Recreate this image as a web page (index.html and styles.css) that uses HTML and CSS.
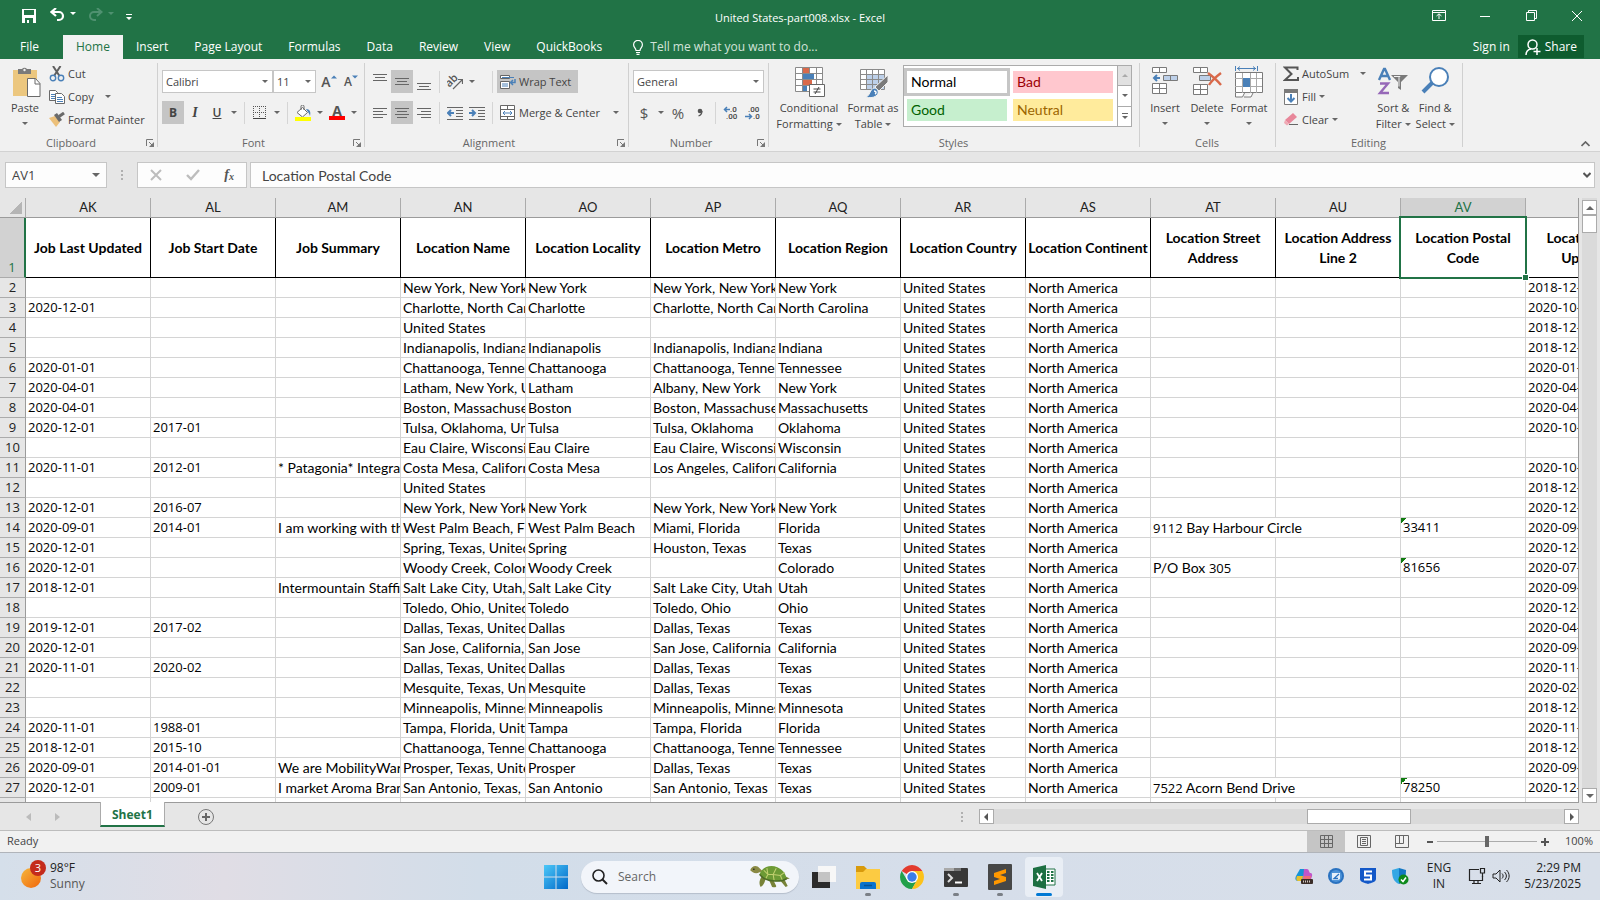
FILE: index.html
```html
<!DOCTYPE html>
<html lang="en">
<head>
    <meta charset="UTF-8">
    <meta name="viewport" content="width=device-width, initial-scale=1.0">
    <title>United States-part008.xlsx - Excel</title>
    <link rel="stylesheet" href="styles.css">
</head>
<body>

    <header class="titlebar">
        <div class="quick-access">
            <button class="qa-save" aria-label="Save"><svg width="14" height="14" viewBox="0 0 14 14"><path d="M0 0h14v14H0z" fill="#fff"/><path d="M2 1h10v5H2zM3 9h8v5H3z" fill="#217346"/><path d="M5 11h2v3H5z" fill="#fff"/></svg></button>
            <button class="qa-undo" aria-label="Undo"><svg width="26" height="14" viewBox="0 0 26 14"><path d="M6 0L1.500 4L6 8M2 4h7a4 4 0 0 1 0 8H7" fill="none" stroke="#fff" stroke-width="2.200"/><path d="M20 4h6l-3 3z" fill="#fff"/></svg></button>
            <button class="qa-redo" aria-label="Redo" disabled><svg width="26" height="14" viewBox="0 0 26 14"><path d="M9 0l4.500 4L9 8M13 4H6a4 4 0 0 0 0 8h2" fill="none" stroke="#4f9170" stroke-width="2"/><path d="M20 4h6l-3 3z" fill="#4f9170"/></svg></button>
            <button class="qa-more" aria-label="Customize"><svg width="6" height="7" viewBox="0 0 6 7"><path d="M0 0h6v1H0zM0 3h6L3 6z" fill="#fff"/></svg></button>
        </div>
        <h1>United States-part008.xlsx - Excel</h1>
        <div class="window-buttons">
            <button aria-label="Ribbon options"><svg width="14" height="11" viewBox="0 0 14 11"><path d="M.5.5h13v10H.5zM.5 2.500h13M7 9V4M4.500 6L7 3.800L9.500 6" fill="none" stroke="#fff"/></svg></button>
            <button aria-label="Minimize"><svg width="10" height="10" viewBox="0 0 10 10"><path d="M0 5.500h10" stroke="#fff"/></svg></button>
            <button aria-label="Restore"><svg width="11" height="11" viewBox="0 0 11 11"><path d="M.5 2.500h8v8h-8zM2.500 2V.5h8v8H9" fill="none" stroke="#fff"/></svg></button>
            <button aria-label="Close"><svg width="10" height="10" viewBox="0 0 10 10"><path d="M0 0l10 10M10 0L0 10" stroke="#fff"/></svg></button>
        </div>
    </header>

    <nav class="tabs">
        <a class="file" href="#">File</a>
        <a class="active" href="#">Home</a>
        <a href="#">Insert</a>
        <a href="#">Page Layout</a>
        <a href="#">Formulas</a>
        <a href="#">Data</a>
        <a href="#">Review</a>
        <a href="#">View</a>
        <a href="#">QuickBooks</a>
        <button class="tell-me"><svg width="10" height="15" viewBox="0 0 10 15"><path d="M3 10.500C3 8 .6 7.500.6 4.800a4.400 4.400 0 0 1 8.800 0C9.400 7.500 7 8 7 10.500zM3 12.500h4M3.500 14.400h3" fill="none" stroke="#fff" stroke-width="1.200"/></svg>Tell me what you want to do...</button>
        <a class="sign-in" href="#">Sign in</a>
        <button class="share"><svg width="16" height="16" viewBox="0 0 16 16"><circle cx="7.500" cy="5.500" r="4.500" fill="none" stroke="#fff" stroke-width="1.500"/><path d="M1 16c0-3.500 2-5.500 5-6M12 9v7M8.500 12.500h7" fill="none" stroke="#fff" stroke-width="1.500"/></svg>Share</button>
    </nav>

    <section class="ribbon">
        <div class="group clipboard">
            <div class="group-body">
                <button class="big">
                    <svg width="32" height="32" viewBox="0 0 32 32"><path d="M4 4h24v26H4z" fill="#ecc77f"/><path d="M9 3h4a3 3 0 0 1 5 0h4v5H9z" fill="#7a7a7a"/><circle cx="15.500" cy="4" r="1.200" fill="#f1f1f1"/><path d="M18.500 12.500h8l4.500 5v13H18.500z" fill="#fff" stroke="#6a6a6a"/><path d="M26 12.500V18h5" fill="none" stroke="#6a6a6a"/></svg>
                    <span>Paste</span><i class="arrow"></i>
                </button>
                <div class="small-list">
                    <button class="small"><svg width="16" height="16" viewBox="0 0 16 16"><path d="M4 0l6.500 10M11.500 0L5 10" stroke="#5f5f5f" stroke-width="2"/><circle cx="4" cy="12" r="2.700" fill="none" stroke="#4a80b8" stroke-width="1.400"/><circle cx="12" cy="12" r="2.700" fill="none" stroke="#4a80b8" stroke-width="1.400"/></svg>Cut</button>
                    <button class="small"><svg width="16" height="16" viewBox="0 0 16 16"><path d="M.5 1.500h6l2 2v8h-8z" fill="#fff" stroke="#6a6a6a"/><path d="M2 5.500h4M2 7.500h4M2 9.500h4" stroke="#4a80b8"/><path d="M6.500 4.500h6l3 3v7h-9z" fill="#fff" stroke="#6a6a6a"/><path d="M8 8.500h5M8 10.500h6M8 12.500h6" stroke="#4a80b8"/></svg>Copy<i class="arrow wide"></i></button>
                    <button class="small"><svg width="16" height="16" viewBox="0 0 16 16"><path d="M0 6l6-2 5 6-4 5z" fill="#ecc07a"/><path d="M5 3l3-2 5 7-3 2z" fill="#6a6a6a"/><path d="M10 4.500L15 1" stroke="#6a6a6a" stroke-width="3"/></svg>Format Painter</button>
                </div>
            </div>
            <div class="group-label">Clipboard<button class="launcher" aria-label="Clipboard settings"><svg width="8" height="8" viewBox="0 0 8 8"><path d="M.5 7V.5H7M3 3l3 3" fill="none" stroke="#777"/><path d="M8 3v5H3z" fill="#777"/></svg></button></div>
        </div>

        <div class="group font">
            <div class="group-body rows">
                <div class="row">
                    <span class="picker"><select class="font-name" aria-label="Font"><option>Calibri</option></select></span>
                    <span class="picker"><select class="font-size" aria-label="Font size"><option>11</option></select></span>
                    <button class="tool letter grow" aria-label="Increase font size">A<svg width="6" height="4" viewBox="0 0 6 4"><path d="M0 3.500h6L3 .5z" fill="#4a80b8"/></svg></button>
                    <button class="tool letter shrink" aria-label="Decrease font size">A<svg width="6" height="4" viewBox="0 0 6 4"><path d="M0 .5h6L3 3.500z" fill="#4a80b8"/></svg></button>
                </div>
                <div class="row">
                    <button class="tool bold on">B</button>
                    <button class="tool italic">I</button>
                    <button class="tool underline">U</button>
                    <button class="drop" aria-label="Underline styles"><i class="arrow"></i></button>
                    <span class="sep"></span>
                    <button class="tool" aria-label="Borders"><svg width="14" height="14" viewBox="0 0 14 14"><path d="M0 .5h13M0 6.500h13M.5 0v12M6.500 0v12M12.500 0v12" stroke="#555" stroke-dasharray="1 1"/><path d="M0 12.500h13" stroke="#444"/></svg></button>
                    <button class="drop" aria-label="Border styles"><i class="arrow"></i></button>
                    <span class="sep"></span>
                    <button class="tool" aria-label="Fill color"><svg width="16" height="16" viewBox="0 0 16 16"><path d="M2 7.500L7.500 2.500l5 5-5 4.500z" fill="#fff" stroke="#6a6a6a"/><path d="M6 5V1.500a1.500 1.500 0 0 1 3 0V5" fill="none" stroke="#6a6a6a"/><path d="M11 4c4 0 5 3 4 7c-1-3-2-4-4-7" fill="#4a80b8"/><path d="M0 12h16v4H0z" fill="#ff0"/></svg></button>
                    <button class="drop" aria-label="Fill colors"><i class="arrow"></i></button>
                    <button class="tool font-color" aria-label="Font color">A</button>
                    <button class="drop" aria-label="Font colors"><i class="arrow"></i></button>
                </div>
            </div>
            <div class="group-label">Font<button class="launcher" aria-label="Font settings"><svg width="8" height="8" viewBox="0 0 8 8"><path d="M.5 7V.5H7M3 3l3 3" fill="none" stroke="#777"/><path d="M8 3v5H3z" fill="#777"/></svg></button></div>
        </div>

        <div class="group alignment">
            <div class="group-body rows">
                <div class="row">
                    <button class="tool" aria-label="Top align"><svg width="14" height="16" viewBox="0 0 14 16"><path d="M0 .5h14M2 3.500h10M0 6.500h14" stroke="#666"/></svg></button>
                    <button class="tool on" aria-label="Middle align"><svg width="14" height="16" viewBox="0 0 14 16"><path d="M0 4.500h14M2 7.500h10M0 10.500h14" stroke="#666"/></svg></button>
                    <button class="tool" aria-label="Bottom align"><svg width="14" height="16" viewBox="0 0 14 16"><path d="M0 9.500h14M2 12.500h10M0 15.500h14" stroke="#666"/></svg></button>
                    <span class="sep"></span>
                    <button class="tool" aria-label="Orientation"><svg width="16" height="16" viewBox="0 0 16 16"><text x="-1" y="10" transform="rotate(-45 5 8)" font-family="Open Sans" font-size="11" font-weight="600" fill="#555">ab</text><path d="M6 15l9-9M11 5.500h4.500V10" fill="none" stroke="#666" stroke-width="1.200"/></svg></button>
                    <button class="drop" aria-label="Orientation options"><i class="arrow"></i></button>
                    <span class="space"></span>
                    <span class="sep"></span>
                    <button class="labelled on"><svg width="16" height="16" viewBox="0 0 16 16"><path d="M.5 1.500h9v3h-9zM.5 7.500h9v7h-9z" fill="#fff" stroke="#666"/><path d="M2 3.500h12M2 10h6M2 12h6" stroke="#4a80b8"/><path d="M15 5v3.500h-4M13 6L10.500 8.500L13 11" fill="none" stroke="#4a80b8" stroke-width="1.500"/></svg>Wrap Text</button>
                </div>
                <div class="row">
                    <button class="tool" aria-label="Align left"><svg width="14" height="12" viewBox="0 0 14 12"><path d="M0 1.500h14M0 4.500h10M0 7.500h14M0 10.500h10" stroke="#666"/></svg></button>
                    <button class="tool on" aria-label="Center"><svg width="14" height="12" viewBox="0 0 14 12"><path d="M0 1.500h14M2 4.500h10M0 7.500h14M2 10.500h10" stroke="#666"/></svg></button>
                    <button class="tool" aria-label="Align right"><svg width="14" height="12" viewBox="0 0 14 12"><path d="M0 1.500h14M4 4.500h10M0 7.500h14M4 10.500h10" stroke="#666"/></svg></button>
                    <span class="sep"></span>
                    <button class="tool" aria-label="Decrease indent"><svg width="16" height="14" viewBox="0 0 16 14"><path d="M0 1.500h16M9 4.500h7M9 7.500h7M9 10.500h7M0 13.500h16" stroke="#666"/><path d="M7 7H1.500M4 4L1 7l3 3" fill="none" stroke="#4a80b8" stroke-width="2"/></svg></button>
                    <button class="tool" aria-label="Increase indent"><svg width="16" height="14" viewBox="0 0 16 14"><path d="M0 1.500h16M9 4.500h7M9 7.500h7M9 10.500h7M0 13.500h16" stroke="#666"/><path d="M0 7h5.500M3 4l3 3-3 3" fill="none" stroke="#4a80b8" stroke-width="2"/></svg></button>
                    <span class="sep"></span>
                    <button class="labelled"><svg width="16" height="16" viewBox="0 0 16 16"><path d="M.5.500h14v14H.5z" fill="#fff" stroke="#666"/><path d="M0 4.500h15M0 11.500h15M7.500 0v4M7.500 12v3" stroke="#666"/><path d="M3 8h9M5 6L3 8l2 2M10 6l2 2-2 2" fill="none" stroke="#4a80b8"/></svg>Merge &amp; Center<i class="arrow wide"></i></button>
                </div>
            </div>
            <div class="group-label">Alignment<button class="launcher" aria-label="Alignment settings"><svg width="8" height="8" viewBox="0 0 8 8"><path d="M.5 7V.5H7M3 3l3 3" fill="none" stroke="#777"/><path d="M8 3v5H3z" fill="#777"/></svg></button></div>
        </div>

        <div class="group number">
            <div class="group-body rows">
                <div class="row">
                    <span class="picker"><select class="number-format" aria-label="Number format"><option>General</option></select></span>
                </div>
                <div class="row">
                    <button class="tool sign">$</button>
                    <button class="drop" aria-label="Currency"><i class="arrow"></i></button>
                    <button class="tool sign">%</button>
                    <button class="tool" aria-label="Comma style"><svg width="6" height="10" viewBox="0 0 6 10"><circle cx="3" cy="3" r="2.300" fill="#555"/><path d="M5 3c0 3-1 4-3.500 5" fill="none" stroke="#555" stroke-width="1.300"/></svg></button>
                    <span class="sep"></span>
                    <button class="tool" aria-label="Increase decimal"><svg width="16" height="14" viewBox="0 0 16 14"><text x="7" y="6" font-family="Roboto" font-size="8" font-weight="500" fill="#444">.0</text><text x="3" y="13" font-family="Roboto" font-size="8" font-weight="500" fill="#444">.00</text><path d="M7 3.500H2M4 1L1.500 3.500L4 6" fill="none" stroke="#4a80b8" stroke-width="1.500"/></svg></button>
                    <button class="tool" aria-label="Decrease decimal"><svg width="16" height="14" viewBox="0 0 16 14"><text x="3" y="6" font-family="Roboto" font-size="8" font-weight="500" fill="#444">.00</text><text x="8" y="13" font-family="Roboto" font-size="8" font-weight="500" fill="#444">.0</text><path d="M0 10.500h6M4 8l2.500 2.500L4 13" fill="none" stroke="#4a80b8" stroke-width="1.500"/></svg></button>
                </div>
            </div>
            <div class="group-label">Number<button class="launcher" aria-label="Number settings"><svg width="8" height="8" viewBox="0 0 8 8"><path d="M.5 7V.5H7M3 3l3 3" fill="none" stroke="#777"/><path d="M8 3v5H3z" fill="#777"/></svg></button></div>
        </div>

        <div class="group styles">
            <div class="group-body">
                <button class="big wide">
                    <svg width="32" height="32" viewBox="0 0 32 32"><path d="M2.500 1.500h27v24h-27z" fill="#fff"/><path d="M10 2h6v5h-6zM10 14h9v5h-9z" fill="#d9694a"/><path d="M10 8h11v5H10zM10 20h4v5h-4z" fill="#4a80b8"/><path d="M2.500 1.500h27v24h-27zM2 7.500h28M2 13.500h28M2 19.500h28M9.500 1v24M16.500 1v6M23.500 1v24" fill="none" stroke="#8a8a8a"/><path d="M16.500 18.500h15v12h-15z" fill="#fff" stroke="#666"/><path d="M20.500 23h7M20.500 26h7M26 21l-4 7" stroke="#444"/></svg>
                    <span>Conditional</span><span>Formatting <i class="arrow"></i></span>
                </button>
                <button class="big table">
                    <svg width="32" height="32" viewBox="0 0 32 32"><path d="M3.500 3.500h24v20h-24z" fill="#fff"/><path d="M9 9h18v14H9z" fill="#bdd0e9"/><path d="M3.500 3.500h24v20h-24zM3 8.500h24M3 13.500h24M3 18.500h24M9.500 3v20M15.500 3v20M21.500 3v20" fill="none" stroke="#8a8a8a"/><path d="M31 9v7l-9 9-4-4z" fill="#7a7a7a" stroke="#f1f1f1"/><path d="M9 31c4-1 4-8 8-9 4 0 6 5 2 8-3 2-7 2-10 1z" fill="#4a80b8" stroke="#f1f1f1"/><path d="M17 25c2 0 3 2 1 3" fill="none" stroke="#fff" stroke-width="1.500"/></svg>
                    <span>Format as</span><span>Table <i class="arrow"></i></span>
                </button>
                <div class="gallery">
                    <div class="swatches">
                        <button class="swatch normal">Normal</button>
                        <button class="swatch bad">Bad</button>
                        <button class="swatch good">Good</button>
                        <button class="swatch neutral">Neutral</button>
                    </div>
                    <div class="gallery-scroll">
                        <button disabled aria-label="Previous styles"><i class="arrow up"></i></button>
                        <button aria-label="Next styles"><i class="arrow"></i></button>
                        <button class="more" aria-label="More styles"><i class="arrow"></i></button>
                    </div>
                </div>
            </div>
            <div class="group-label">Styles</div>
        </div>

        <div class="group cells">
            <div class="group-body">
                <button class="big narrow">
                    <svg width="32" height="32" viewBox="0 0 32 32"><path d="M3.500 1.500h14v5h-14zM10.500 1v5M3.500 17.500h14v10h-14zM10.500 17v10M3 22.500h14" fill="#fff" stroke="#7a7a7a"/><path d="M14.500 9.500h14v5h-14z" fill="#bdd0e9" stroke="#7a7a7a"/><path d="M21.500 9v5" stroke="#7a7a7a"/><path d="M11 12H5M8 9l-3 3 3 3" fill="none" stroke="#4a80b8" stroke-width="2"/></svg>
                    <span>Insert</span><i class="arrow"></i>
                </button>
                <button class="big narrow">
                    <svg width="32" height="32" viewBox="0 0 32 32"><path d="M2.500 1.500h14v5h-14zM9.500 1v5M2.500 18.500h14v10h-14zM9.500 18v10M2 23.500h14" fill="#fff" stroke="#7a7a7a"/><path d="M8.500 9.500h11v5h-11z" fill="#bdd0e9" stroke="#7a7a7a"/><path d="M17 7c4 3 9 7 13 12M30 7c-4 3-9 7-12 12" fill="none" stroke="#d9694a" stroke-width="2.400"/></svg>
                    <span>Delete</span><i class="arrow"></i>
                </button>
                <button class="big narrow">
                    <svg width="32" height="32" viewBox="0 0 32 32"><path d="M2.500 6.500h27v20h-27z" fill="#fff" stroke="#7a7a7a"/><path d="M2 12.500h27M2 20.500h27M9.500 7v20M17.500 7v20M23.500 7v20" stroke="#aaa"/><path d="M10 12h7v9h-7z" fill="#4a80b8"/><path d="M2.500 27v4h7l2-4M11 31h7l2-4" fill="#fff" stroke="#7a7a7a"/><path d="M2.500 0v5M24.500 0v5M4 2.500h19M7 .5L4.500 2.500L7 4.500M20 .5l2.500 2L20 4.500" fill="none" stroke="#4a80b8"/></svg>
                    <span>Format</span><i class="arrow"></i>
                </button>
            </div>
            <div class="group-label">Cells</div>
        </div>

        <div class="group editing">
            <div class="group-body">
                <div class="small-list">
                    <button class="small"><svg width="16" height="16" viewBox="0 0 16 16"><path d="M14.500 4V1.500H2L8.500 8L2 14h13v-3" fill="none" stroke="#555" stroke-width="2"/></svg>AutoSum<i class="arrow wide"></i></button>
                    <button class="small"><svg width="16" height="16" viewBox="0 0 16 16"><path d="M1.500 1.500h13v14h-13z" fill="#fff" stroke="#7a7a7a"/><path d="M1 0h14v4H1z" fill="#7a7a7a"/><path d="M8 5v7M4.500 9L8 12.500L11.500 9" fill="none" stroke="#4a80b8" stroke-width="2"/></svg>Fill<i class="arrow"></i></button>
                    <button class="small"><svg width="16" height="16" viewBox="0 0 16 16"><path d="M2 8l8-7 4 4-8 7z" fill="#e8879a"/><path d="M2 8l4 4-2 1.500L1 11z" fill="#f0aab5"/><path d="M6 12.500h9" stroke="#666"/></svg>Clear<i class="arrow"></i></button>
                </div>
                <button class="big narrow sort">
                    <svg width="32" height="32" viewBox="0 0 32 32"><path d="M2 14L7 3h1l5 11M4 10h7" fill="none" stroke="#4a80b8" stroke-width="2.400"/><path d="M3 17.500h8l-8 9.500h9" fill="none" stroke="#9668b8" stroke-width="2.400"/><path d="M14 9h17l-7 7v8l-3-2v-6z" fill="#7a7a7a"/><path d="M17 10.500h6l-1 1v9" fill="none" stroke="#f1f1f1"/></svg>
                    <span>Sort &amp;</span><span>Filter <i class="arrow"></i></span>
                </button>
                <button class="big narrow">
                    <svg width="32" height="32" viewBox="0 0 32 32"><circle cx="20" cy="11" r="9" fill="#fff" stroke="#4a80b8" stroke-width="2"/><path d="M13 17L4 26" stroke="#4a80b8" stroke-width="4"/></svg>
                    <span>Find &amp;</span><span>Select <i class="arrow"></i></span>
                </button>
            </div>
            <div class="group-label">Editing</div>
        </div>

        <button class="collapse" aria-label="Collapse the ribbon"><svg width="9" height="6" viewBox="0 0 9 6"><path d="M.5 5l4-4 4 4" fill="none" stroke="#666" stroke-width="1.700"/></svg></button>
    </section>

    <section class="formula-bar">
        <div class="name-box"><input type="text" value="AV1" aria-label="Name box"><button aria-label="Named ranges"><i class="arrow large"></i></button></div>
        <span class="grip"></span>
        <div class="formula-buttons">
            <button aria-label="Cancel" disabled><svg width="12" height="12" viewBox="0 0 12 12"><path d="M1 1l10 10M11 1L1 11" stroke="#bdbdbd" stroke-width="2"/></svg></button>
            <button aria-label="Enter" disabled><svg width="14" height="12" viewBox="0 0 14 12"><path d="M1 6l4 4 8-9" fill="none" stroke="#bdbdbd" stroke-width="2.400"/></svg></button>
            <button class="fx" aria-label="Insert function">f<sub>x</sub></button>
        </div>
        <div class="formula-input"><input type="text" value="Location Postal Code" aria-label="Formula"><button aria-label="Expand formula bar"><svg width="8" height="6" viewBox="0 0 8 6"><path d="M.5 1L4 4.500L7.500 1" fill="none" stroke="#555" stroke-width="2"/></svg></button></div>
    </section>

    <main class="workbook">
        <div class="sheet">
            <table>
                <thead>
                    <tr><th class="corner"></th><th>AK</th><th>AL</th><th>AM</th><th>AN</th><th>AO</th><th>AP</th><th>AQ</th><th>AR</th><th>AS</th><th>AT</th><th>AU</th><th class="current">AV</th><th></th></tr>
                </thead>
                <tbody>
                    <tr class="titles"><th>1</th><td>Job Last Updated</td><td>Job Start Date</td><td>Job Summary</td><td>Location Name</td><td>Location Locality</td><td>Location Metro</td><td>Location Region</td><td>Location Country</td><td>Location Continent</td><td>Location Street<br>Address</td><td>Location Address<br>Line 2</td><td class="selected">Location Postal<br>Code</td><td>Location Last<br>Updated</td></tr>
                    <tr><th>2</th><td></td><td></td><td></td><td>New York, New York, United States</td><td>New York</td><td>New York, New York</td><td>New York</td><td>United States</td><td>North America</td><td></td><td></td><td></td><td>2018-12-01</td></tr>
                    <tr><th>3</th><td>2020-12-01</td><td></td><td></td><td>Charlotte, North Carolina, United States</td><td>Charlotte</td><td>Charlotte, North Carolina</td><td>North Carolina</td><td>United States</td><td>North America</td><td></td><td></td><td></td><td>2020-10-01</td></tr>
                    <tr><th>4</th><td></td><td></td><td></td><td>United States</td><td></td><td></td><td></td><td>United States</td><td>North America</td><td></td><td></td><td></td><td>2018-12-01</td></tr>
                    <tr><th>5</th><td></td><td></td><td></td><td>Indianapolis, Indiana, United States</td><td>Indianapolis</td><td>Indianapolis, Indiana</td><td>Indiana</td><td>United States</td><td>North America</td><td></td><td></td><td></td><td>2018-12-01</td></tr>
                    <tr><th>6</th><td>2020-01-01</td><td></td><td></td><td>Chattanooga, Tennessee, United States</td><td>Chattanooga</td><td>Chattanooga, Tennessee</td><td>Tennessee</td><td>United States</td><td>North America</td><td></td><td></td><td></td><td>2020-01-01</td></tr>
                    <tr><th>7</th><td>2020-04-01</td><td></td><td></td><td>Latham, New York, United States</td><td>Latham</td><td>Albany, New York</td><td>New York</td><td>United States</td><td>North America</td><td></td><td></td><td></td><td>2020-04-01</td></tr>
                    <tr><th>8</th><td>2020-04-01</td><td></td><td></td><td>Boston, Massachusetts, United States</td><td>Boston</td><td>Boston, Massachusetts</td><td>Massachusetts</td><td>United States</td><td>North America</td><td></td><td></td><td></td><td>2020-04-01</td></tr>
                    <tr><th>9</th><td>2020-12-01</td><td>2017-01</td><td></td><td>Tulsa, Oklahoma, United States</td><td>Tulsa</td><td>Tulsa, Oklahoma</td><td>Oklahoma</td><td>United States</td><td>North America</td><td></td><td></td><td></td><td>2020-10-01</td></tr>
                    <tr><th>10</th><td></td><td></td><td></td><td>Eau Claire, Wisconsin, United States</td><td>Eau Claire</td><td>Eau Claire, Wisconsin</td><td>Wisconsin</td><td>United States</td><td>North America</td><td></td><td></td><td></td><td></td></tr>
                    <tr><th>11</th><td>2020-11-01</td><td>2012-01</td><td>* Patagonia* Integrated</td><td>Costa Mesa, California, United States</td><td>Costa Mesa</td><td>Los Angeles, California</td><td>California</td><td>United States</td><td>North America</td><td></td><td></td><td></td><td>2020-10-01</td></tr>
                    <tr><th>12</th><td></td><td></td><td></td><td>United States</td><td></td><td></td><td></td><td>United States</td><td>North America</td><td></td><td></td><td></td><td>2018-12-01</td></tr>
                    <tr><th>13</th><td>2020-12-01</td><td>2016-07</td><td></td><td>New York, New York, United States</td><td>New York</td><td>New York, New York</td><td>New York</td><td>United States</td><td>North America</td><td></td><td></td><td></td><td>2020-12-01</td></tr>
                    <tr><th>14</th><td>2020-09-01</td><td>2014-01</td><td>I am working with the</td><td>West Palm Beach, Florida, United States</td><td>West Palm Beach</td><td>Miami, Florida</td><td>Florida</td><td>United States</td><td>North America</td><td colspan="2"><span class="num">9112</span> Bay Harbour Circle</td><td class="flagged">33411</td><td>2020-09-01</td></tr>
                    <tr><th>15</th><td>2020-12-01</td><td></td><td></td><td>Spring, Texas, United States</td><td>Spring</td><td>Houston, Texas</td><td>Texas</td><td>United States</td><td>North America</td><td></td><td></td><td></td><td>2020-12-01</td></tr>
                    <tr><th>16</th><td>2020-12-01</td><td></td><td></td><td>Woody Creek, Colorado, United States</td><td>Woody Creek</td><td></td><td>Colorado</td><td>United States</td><td>North America</td><td>P/O Box <span class="num">305</span></td><td></td><td class="flagged">81656</td><td>2020-07-01</td></tr>
                    <tr><th>17</th><td>2018-12-01</td><td></td><td>Intermountain Staffing</td><td>Salt Lake City, Utah, United States</td><td>Salt Lake City</td><td>Salt Lake City, Utah</td><td>Utah</td><td>United States</td><td>North America</td><td></td><td></td><td></td><td>2020-09-01</td></tr>
                    <tr><th>18</th><td></td><td></td><td></td><td>Toledo, Ohio, United States</td><td>Toledo</td><td>Toledo, Ohio</td><td>Ohio</td><td>United States</td><td>North America</td><td></td><td></td><td></td><td>2020-12-01</td></tr>
                    <tr><th>19</th><td>2019-12-01</td><td>2017-02</td><td></td><td>Dallas, Texas, United States</td><td>Dallas</td><td>Dallas, Texas</td><td>Texas</td><td>United States</td><td>North America</td><td></td><td></td><td></td><td>2020-04-01</td></tr>
                    <tr><th>20</th><td>2020-12-01</td><td></td><td></td><td>San Jose, California, United States</td><td>San Jose</td><td>San Jose, California</td><td>California</td><td>United States</td><td>North America</td><td></td><td></td><td></td><td>2020-09-01</td></tr>
                    <tr><th>21</th><td>2020-11-01</td><td>2020-02</td><td></td><td>Dallas, Texas, United States</td><td>Dallas</td><td>Dallas, Texas</td><td>Texas</td><td>United States</td><td>North America</td><td></td><td></td><td></td><td>2020-11-01</td></tr>
                    <tr><th>22</th><td></td><td></td><td></td><td>Mesquite, Texas, United States</td><td>Mesquite</td><td>Dallas, Texas</td><td>Texas</td><td>United States</td><td>North America</td><td></td><td></td><td></td><td>2020-02-01</td></tr>
                    <tr><th>23</th><td></td><td></td><td></td><td>Minneapolis, Minnesota, United States</td><td>Minneapolis</td><td>Minneapolis, Minnesota</td><td>Minnesota</td><td>United States</td><td>North America</td><td></td><td></td><td></td><td>2018-12-01</td></tr>
                    <tr><th>24</th><td>2020-11-01</td><td>1988-01</td><td></td><td>Tampa, Florida, United States</td><td>Tampa</td><td>Tampa, Florida</td><td>Florida</td><td>United States</td><td>North America</td><td></td><td></td><td></td><td>2020-11-01</td></tr>
                    <tr><th>25</th><td>2018-12-01</td><td>2015-10</td><td></td><td>Chattanooga, Tennessee, United States</td><td>Chattanooga</td><td>Chattanooga, Tennessee</td><td>Tennessee</td><td>United States</td><td>North America</td><td></td><td></td><td></td><td>2018-12-01</td></tr>
                    <tr><th>26</th><td>2020-09-01</td><td>2014-01-01</td><td>We are MobilityWare</td><td>Prosper, Texas, United States</td><td>Prosper</td><td>Dallas, Texas</td><td>Texas</td><td>United States</td><td>North America</td><td></td><td></td><td></td><td>2020-09-01</td></tr>
                    <tr><th>27</th><td>2020-12-01</td><td>2009-01</td><td>I market Aroma Brands</td><td>San Antonio, Texas, United States</td><td>San Antonio</td><td>San Antonio, Texas</td><td>Texas</td><td>United States</td><td>North America</td><td colspan="2"><span class="num">7522</span> Acorn Bend Drive</td><td class="flagged">78250</td><td>2020-12-01</td></tr>
                    <tr><th></th><td></td><td></td><td></td><td></td><td></td><td></td><td></td><td></td><td></td><td></td><td></td><td></td><td></td></tr>
                </tbody>
            </table>
        </div>
        <div class="scroll-y">
            <button aria-label="Scroll up"><i class="arrow large up"></i></button>
            <div class="thumb"></div>
            <button class="end" aria-label="Scroll down"><i class="arrow large"></i></button>
        </div>
    </main>

    <section class="sheet-tabs">
        <button class="nav-arrow" aria-label="Previous sheet" disabled><svg width="5" height="8" viewBox="0 0 5 8"><path d="M5 0v8L0 4z" fill="#bbb"/></svg></button>
        <button class="nav-arrow" aria-label="Next sheet" disabled><svg width="5" height="8" viewBox="0 0 5 8"><path d="M0 0v8l5-4z" fill="#bbb"/></svg></button>
        <a class="sheet-tab" href="#">Sheet1</a>
        <button class="add-sheet" aria-label="New sheet"><svg width="16" height="16" viewBox="0 0 16 16"><circle cx="8" cy="8" r="7.500" fill="none" stroke="#777"/><path d="M8 4v8M4 8h8" stroke="#666" stroke-width="2"/></svg></button>
        <span class="grip"></span>
        <div class="scroll-x">
            <button aria-label="Scroll left"><svg width="4" height="8" viewBox="0 0 4 8"><path d="M4 0v8L0 4z" fill="#555"/></svg></button>
            <div class="track"><div class="thumb"></div></div>
            <button aria-label="Scroll right"><svg width="4" height="8" viewBox="0 0 4 8"><path d="M0 0v8l4-4z" fill="#555"/></svg></button>
        </div>
    </section>

    <footer class="status">
        <span class="ready">Ready</span>
        <button class="view on" aria-label="Normal view"><svg width="13" height="13" viewBox="0 0 13 13"><path d="M.5.500h12v12H.5zM4.500 0v13M8.500 0v13M0 4.500h13M0 8.500h13" fill="none" stroke="#666"/></svg></button>
        <button class="view" aria-label="Page layout view"><svg width="14" height="13" viewBox="0 0 14 13"><path d="M.5.500h13v12H.5zM3.500 2.500h7v8h-7zM5 4.500h4M5 6.500h4M5 8.500h4" fill="none" stroke="#666"/></svg></button>
        <button class="view" aria-label="Page break view"><svg width="14" height="13" viewBox="0 0 14 13"><path d="M.5.500h13v12H.5zM.5 8.500h8V.5M4.500 0v8" fill="none" stroke="#666"/></svg></button>
        <button class="zoom-step" aria-label="Zoom out"><svg width="6" height="8" viewBox="0 0 6 8"><path d="M0 4h6" stroke="#555" stroke-width="2"/></svg></button>
        <input class="zoom" type="range" min="0" max="100" value="50" aria-label="Zoom">
        <button class="zoom-step" aria-label="Zoom in"><svg width="8" height="8" viewBox="0 0 8 8"><path d="M0 4h8M4 0v8" stroke="#555" stroke-width="2"/></svg></button>
        <span class="percent">100%</span>
    </footer>

    <section class="taskbar">
        <a class="weather" href="#">
            <svg width="27" height="32" viewBox="0 0 27 32"><defs><linearGradient id="sun" x1="0" y1="0" x2="1" y2="1"><stop offset="0" stop-color="#f6b73c"/><stop offset="1" stop-color="#f0660c"/></linearGradient></defs><circle cx="10" cy="18" r="10" fill="url(#sun)"/><circle cx="17" cy="8" r="8" fill="#c42b1c"/><text x="17" y="12" text-anchor="middle" font-family="Open Sans" font-size="11" fill="#fff">3</text></svg>
            <span>98°F<br><small>Sunny</small></span>
        </a>
        <div class="apps">
            <button aria-label="Start"><svg width="24" height="24" viewBox="0 0 24 24"><defs><linearGradient id="win" x1="0" y1="0" x2="1" y2="1"><stop offset="0" stop-color="#4cc8f8"/><stop offset="1" stop-color="#0067c8"/></linearGradient></defs><path d="M0 0h11.500v11.500H0zM12.500 0H24v11.500H12.500zM0 12.500h11.500V24H0zM12.500 12.500H24V24H12.500z" fill="url(#win)"/></svg></button>
            <label class="search">
                <svg width="16" height="16" viewBox="0 0 16 16"><circle cx="6.500" cy="6.500" r="5.500" fill="none" stroke="#222" stroke-width="1.600"/><path d="M10.500 10.500l4.500 4.500" stroke="#222" stroke-width="2"/></svg>
                <input type="text" placeholder="Search" aria-label="Search">
                <svg width="42" height="25" viewBox="0 0 40 24"><path d="M10 8C6 10 3 8 1 6c1-4 6-6 9-2l3 3z" fill="#8a8a45"/><path d="M12 12c-2 3-3 7-1 10 3-1 4-5 5-8zM19 15l3 7c3 1 4 0 4-1l-3-6zM30 16l5 6 2-1-3-6zM33 11l6 3-5 1z" fill="#778238"/><path d="M10 10C12 3 20 0 27 3c5 2 8 6 9 11-4 4-21 4-26-4z" fill="#6c9a35"/><path d="M14 6l4 4-2 4M18 10h5l3-6M23 10l1 6M23 10l7 1 4-3M30 11l2 5M18 10l-1-6" fill="none" stroke="#c2d070"/><path d="M10 10c5 7 20 8 26 4" fill="none" stroke="#4d6b26" stroke-width="1.500"/><circle cx="4.500" cy="5" r=".8" fill="#222"/></svg>
            </label>
            <button aria-label="Task view"><svg width="24" height="24" viewBox="0 0 24 24"><path d="M0 7h18v16H0z" fill="#2b2b2b"/><path d="M6 1h18v16H6z" fill="#f7f7f7"/><path d="M6 7h12v10H6z" fill="#c4c4c4"/></svg></button>
            <button class="running" aria-label="File Explorer"><svg width="24" height="24" viewBox="0 0 24 24"><path d="M0 1h8l3 3v3H0z" fill="#d89a0c"/><path d="M0 7h7l3-3h14v20H0z" fill="#fccb42"/><path d="M4 24v-5a2 2 0 0 1 2-2h12a2 2 0 0 1 2 2v5z" fill="#0a72cc"/><path d="M8 20.500h8" stroke="#075293" stroke-width="1.500"/></svg></button>
            <button aria-label="Chrome"><svg width="24" height="24" viewBox="1 1 22 22"><path d="M12 12L2.500 6.500A11 11 0 0 1 21.500 6.500H12z" fill="#e33b2e"/><path d="M12 12l4.800 2.500L12 23A11 11 0 0 1 2.500 6.500L7 14z" fill="#22a04a"/><path d="M12 6.500h9.500A11 11 0 0 1 12 23l4.800-8.500z" fill="#fcc21b"/><circle cx="12" cy="12" r="5.500" fill="#fff"/><circle cx="12" cy="12" r="4.300" fill="#3b7de9"/></svg></button>
            <button class="running" aria-label="Terminal"><svg width="24" height="24" viewBox="0 0 24 24"><rect x="0" y="3" width="24" height="19" rx="1" fill="#383838"/><path d="M0 3h10v3H0z" fill="#aaa"/><path d="M10 3h7v3h-7z" fill="#777"/><path d="M4 9l4 4L4 17" fill="none" stroke="#ddd" stroke-width="2"/><path d="M11 17.500h7" stroke="#fff" stroke-width="2"/></svg></button>
            <button class="running" aria-label="Sublime Text"><svg width="24" height="26" viewBox="0 0 24 26"><rect x="0" y="0" width="24" height="26" rx="1" fill="#474747"/><path d="M6 9l12-4v4l-6 2 6 2v4L6 21v-4l6-2-6-2z" fill="#ff9800"/></svg></button>
            <button class="running current" aria-label="Excel"><svg width="24" height="24" viewBox="0 0 24 24"><path d="M13 4h10v16H13z" fill="#fff" stroke="#217346"/><path d="M15 7h2.500M19 7h2.500M15 10h2.500M19 10h2.500M15 13h2.500M19 13h2.500M15 16h2.500M19 16h2.500" stroke="#217346" stroke-width="1.800"/><path d="M1 3l13-3v24L1 21z" fill="#1d6f42"/><path d="M5 8l5 8M10 8l-5 8" stroke="#fff" stroke-width="1.800"/></svg></button>
        </div>
        <div class="tray">
            <button aria-label="Copilot"><svg width="18" height="18" viewBox="0 0 18 18"><path d="M5 2h6l-4 12H3c-3 0-3-3-2-5z" fill="#1593d8"/><path d="M2 9h6l-1 5H3c-2 0-2-3-1-5z" fill="#e6c02c"/><path d="M9 2h3c2 0 2 3 3 4h1c2 1 1 4 0 6H8z" fill="#c156c9"/><path d="M9 9h7l-1 4H8z" fill="#ef6d77"/><rect x="6" y="12" width="12" height="5" rx="1" fill="#3a2d28"/><path d="M8 14.500h8" stroke="#cfc7c0" stroke-width="2" stroke-dasharray="1 1"/></svg></button>
            <button aria-label="Sync"><svg width="18" height="18" viewBox="0 0 18 18"><circle cx="9" cy="9" r="8" fill="#2a72c0"/><circle cx="9" cy="9" r="6" fill="#4d93d8"/><path d="M5 6h8v6l-2 1H5z" fill="#e6f0fa"/><path d="M12 7l-5 4.500h4" fill="none" stroke="#2a72c0" stroke-width="1.300"/></svg></button>
            <button aria-label="Snagit"><svg width="18" height="18" viewBox="0 0 18 18"><path d="M1 1h16v11c0 3-5 4-8 5-3-1-8-2-8-5z" fill="#1358c8"/><path d="M13 4.500H6v4h6v4H5" fill="none" stroke="#fff" stroke-width="2"/></svg></button>
            <button aria-label="Security"><svg width="18" height="18" viewBox="0 0 18 18"><path d="M1 3l7-2v16C3 15 1 11 1 3z" fill="#33a7e4"/><path d="M8 1l7 2c0 8-2 12-7 14z" fill="#1378c4"/><circle cx="12.500" cy="12.500" r="5" fill="#0d8a1c"/><path d="M10 12.500l2 2 3-4" fill="none" stroke="#fff" stroke-width="1.500"/></svg></button>
            <button class="language">ENG<br>IN</button>
            <button class="system" aria-label="Network and volume"><svg width="18" height="18" viewBox="0 0 18 18"><path d="M11 2.500H1.500v11h13V9M4 16.500h9M6 14v2M10 14v2" fill="none" stroke="#222" stroke-width="1.200"/><path d="M12.500 1.500h4V6h-4zM14.500 6v4" fill="none" stroke="#222" stroke-width="1.200"/></svg><svg width="18" height="18" viewBox="0 0 18 18"><path d="M1 7h3l4-4v12l-4-4H1zM10 6.500c1.500 1.500 1.500 3.500 0 5M12.500 5c2.500 2.500 2.500 5.500 0 8M14.500 3c3.500 3.500 3.500 8.500 0 12" fill="none" stroke="#222"/></svg></button>
            <button class="clock">2:29 PM<br>5/23/2025</button>
        </div>
    </section>

</body>
</html>
```
FILE: styles.css
```css
* {
    box-sizing: border-box;
}
body {
    margin: 0;
    height: 100vh;
    display: flex;
    flex-direction: column;
    overflow: hidden;
    background-color: #e6e6e6;
    color: #444;
    font-family: 'Open Sans', 'Noto Sans', sans-serif;
    font-size: 11px;
}
button, input, select {
    margin: 0;
    padding: 0;
    border: 0;
    background: none;
    color: inherit;
    font: inherit;
    outline: 0;
}
a {
    color: inherit;
    text-decoration: none;
}
svg {
    display: block;
    flex: none;
}

/* small drop-down triangle */
.arrow {
    display: inline-block;
    flex: none;
    border: 3px solid transparent;
    border-top-color: #666;
    border-bottom: 0;
}
.arrow.up {
    border-top: 0;
    border-bottom: 3px solid #666;
}
.arrow.large {
    border-width: 4px 4px 0;
}
.arrow.large.up {
    border-width: 0 4px 4px;
}

/* title bar */
.titlebar {
    flex: none;
    height: 35px;
    display: grid;
    grid-template-columns: 1fr auto 1fr;
    align-items: center;
    background-color: #217346;
    color: #fff;
}
.titlebar h1 {
    margin: 0;
    font-size: 11px;
    font-weight: 400;
}
.quick-access {
    display: flex;
    align-items: center;
    gap: 12px;
    padding: 0 0 5px 22px;
}
.quick-access .qa-save {
    padding-top: 1px;
}
.quick-access .qa-undo {
    margin-left: 2px;
}
.quick-access .qa-more {
    padding-top: 4px;
}
.window-buttons {
    display: flex;
    justify-content: flex-end;
    padding-bottom: 4px;
}
.window-buttons button {
    width: 46px;
    display: flex;
    justify-content: center;
    align-items: center;
}

/* ribbon tabs */
.tabs {
    flex: none;
    height: 24px;
    display: flex;
    background-color: #217346;
    color: #fff;
    font-size: 12px;
    line-height: 24px;
}
.tabs a {
    padding: 0 13px;
}
.tabs .file {
    padding: 0 24px 0 20px;
}
.tabs .active {
    background-color: #f1f1f1;
    color: #217346;
}
.tell-me {
    display: flex;
    align-items: center;
    gap: 7px;
    padding-left: 18px;
    color: #d3e3da;
}
.tabs .sign-in {
    margin-left: auto;
    padding: 0 8px;
}
.share {
    display: flex;
    align-items: center;
    gap: 4px;
    height: 23px;
    margin-right: 16px;
    padding: 0 7px;
    background-color: #0e5c2f;
}

/* ribbon */
.ribbon {
    position: relative;
    flex: none;
    height: 93px;
    display: flex;
    background-color: #f1f1f1;
    border-bottom: 1px solid #d2d2d2;
}
.group {
    position: relative;
    flex: none;
    display: flex;
    flex-direction: column;
}
.group::after {
    content: '';
    position: absolute;
    top: 4px;
    right: 0;
    bottom: 4px;
    width: 1px;
    background-color: #d0d0d0;
}
.clipboard { width: 158px; }
.font { width: 207px; }
.alignment { width: 264px; }
.number { width: 140px; }
.styles { width: 371px; }
.cells { width: 136px; }
.editing { width: 187px; }

.group-body {
    height: 75px;
    display: flex;
}
.group-body.rows {
    flex-direction: column;
    gap: 8px;
    padding: 11px 0 0 4px;
}
.row {
    height: 23px;
    display: flex;
    align-items: center;
}
.group-label {
    position: relative;
    height: 17px;
    line-height: 17px;
    padding-right: 16px;
    text-align: center;
    color: #666;
}
.styles .group-label,
.cells .group-label,
.editing .group-label {
    padding-right: 2px;
}
.launcher {
    position: absolute;
    right: 4px;
    top: 5px;
}
.big {
    width: 50px;
    padding-top: 7px;
    display: flex;
    flex-direction: column;
    align-items: center;
    line-height: 16px;
    white-space: nowrap;
}
.big svg {
    margin-bottom: 2px;
}
.big > .arrow {
    margin-top: 6px;
}
.big span .arrow {
    vertical-align: 2px;
}
.big.wide { width: 78px; }
.big.table { width: 50px; }
.big.narrow { width: 42px; }
.small-list {
    display: flex;
    flex-direction: column;
    padding-top: 3px;
}
.small {
    height: 23px;
    display: flex;
    align-items: center;
    gap: 3px;
}
.small .wide {
    margin-left: 8px;
}
.clipboard .small-list {
    margin-left: -1px;
}
.tool {
    width: 22px;
    height: 23px;
    display: flex;
    align-items: center;
    justify-content: center;
}
.on {
    background-color: #c5c5c5;
}
.drop {
    width: 12px;
    height: 23px;
    display: flex;
    align-items: center;
    justify-content: center;
}
.space {
    width: 10px;
}
.sep {
    width: 1px;
    height: 22px;
    margin: 0 4px;
    background-color: #d5d5d5;
}
.labelled {
    height: 23px;
    display: flex;
    align-items: center;
    gap: 3px;
    padding: 0 7px 0 3px;
}
.labelled .wide {
    margin-left: 10px;
}
.picker {
    position: relative;
}
.picker::after {
    content: '';
    position: absolute;
    right: 5px;
    top: 10px;
    border: 3px solid transparent;
    border-top-color: #666;
    border-bottom: 0;
    pointer-events: none;
}
.picker select {
    display: block;
    height: 23px;
    padding: 0 3px;
    appearance: none;
    background-color: #fff;
    border: 1px solid #c6c6c6;
}
.font-name { width: 111px; }
.font-size { width: 43px; }
.number-format { width: 131px; }
.letter {
    font-size: 14px;
    font-weight: 600;
    color: #555;
}
.letter svg {
    margin-top: -10px;
}
.shrink {
    font-size: 12px;
}
.grow {
    margin-left: 2px;
}
.bold {
    font-weight: 700;
    font-size: 12px;
}
.italic {
    font-family: 'Liberation Serif', serif;
    font-style: italic;
    font-weight: 700;
    font-size: 14px;
}
.underline {
    font-weight: 600;
    font-size: 12px;
    text-decoration: underline;
}
.font-color {
    align-items: flex-start;
    padding-top: 3px;
    background: linear-gradient(#f00, #f00) 3px 15px / 16px 4px no-repeat;
    color: #555;
    font-size: 14px;
    font-weight: 700;
    line-height: 14px;
}
.sign {
    font-size: 15px;
    color: #555;
}

.styles .group-body {
    padding-left: 1px;
}
.gallery {
    display: flex;
    width: 229px;
    height: 62px;
    margin: 6px 0 0 5px;
    border: 1px solid #ababab;
    background-color: #fff;
}
.swatches {
    flex: 1;
    display: grid;
    grid-template-columns: 100px 100px;
    gap: 6px;
    align-content: start;
    padding: 5px 3px;
}
.swatch {
    height: 22px;
    padding: 0 0 1px 4px;
    text-align: left;
    font-family: Lato, 'Open Sans', sans-serif;
    font-size: 14px;
    line-height: 20px;
}
.normal {
    outline: 3px solid #c6c6c6;
    color: #000;
}
.bad {
    background-color: #ffc7ce;
    color: #9c0006;
}
.good {
    background-color: #c6efce;
    color: #006100;
}
.neutral {
    background-color: #ffeb9c;
    color: #9c6500;
}
.gallery-scroll {
    width: 14px;
    display: flex;
    flex-direction: column;
    border-left: 1px solid #ababab;
}
.gallery-scroll button {
    flex: 1;
    display: flex;
    align-items: center;
    justify-content: center;
    border-bottom: 1px solid #ababab;
}
.gallery-scroll button:disabled {
    background-color: #e1e1e1;
}
.gallery-scroll button:disabled .arrow {
    border-bottom-color: #aaa;
}
.gallery-scroll .more {
    border-bottom: 0;
    flex-direction: column;
    gap: 2px;
}
.more::before {
    content: '';
    width: 6px;
    height: 1px;
    background-color: #666;
}
.cells .group-body {
    padding-left: 4px;
}
.editing .group-body {
    padding-left: 7px;
}
.sort {
    margin-left: 6px;
}
.collapse {
    position: absolute;
    right: 10px;
    bottom: 4px;
}

/* formula bar */
.formula-bar {
    flex: none;
    height: 46px;
    display: flex;
    align-items: flex-start;
    padding: 10px 5px 0;
    font-size: 13px;
}
.name-box, .formula-buttons, .formula-input {
    height: 26px;
    display: flex;
    align-items: center;
    background-color: #fdfdfd;
    border: 1px solid #c6c6c6;
}
.name-box {
    width: 102px;
}
.name-box input {
    flex: 1;
    min-width: 0;
    padding-left: 6px;
}
.name-box button {
    display: flex;
    margin-right: 6px;
}
.formula-input {
    flex: 1;
}
.formula-input input {
    flex: 1;
    padding-left: 11px;
    font-family: Lato, 'Open Sans', sans-serif;
    font-size: 14px;
}
.formula-input button {
    margin-right: 3px;
}
.formula-buttons {
    width: 110px;
    margin-right: 3px;
    justify-content: space-between;
    padding: 0 12px;
}
.fx {
    font-family: 'Liberation Serif', serif;
    font-style: italic;
    font-weight: 700;
    font-size: 14px;
    line-height: 20px;
    color: #555;
}
.fx sub {
    font-size: 10px;
    line-height: 1px;
    vertical-align: -1px;
}
.grip {
    width: 2px;
    height: 10px;
    background: repeating-linear-gradient(#b0b0b0 0 2px, transparent 2px 4px);
}
.formula-bar .grip {
    margin: 8px 14px;
}

/* worksheet */
.workbook {
    flex: 1;
    min-height: 0;
    display: flex;
}
.sheet {
    flex: 1;
    min-width: 0;
    overflow: hidden;
    border-right: 1px solid #9b9b9b;
    border-bottom: 1px solid #9b9b9b;
    background-color: #fff;
}
.sheet table {
    width: 1651px;
    table-layout: fixed;
    border-spacing: 0;
    color: #000;
    font-family: Lato, 'Open Sans', sans-serif;
    font-size: 14px;
    line-height: 19px;
}
.sheet td, .sheet th {
    height: 20px;
    padding: 0 0 0 2px;
    overflow: hidden;
    white-space: nowrap;
    border-right: 1px solid #d4d4d4;
    border-bottom: 1px solid #d4d4d4;
}
.sheet th {
    padding: 0;
    font-weight: 400;
    color: #222;
    background-color: #e6e6e6;
}
.sheet thead th {
    font-size: 13px;
    border-right-color: #ababab;
    border-bottom-color: #9b9b9b;
}
.sheet tbody th {
    border-right-color: #9b9b9b;
    border-bottom-color: #ababab;
}

/* dates, postal codes and row numbers */
.sheet tbody th,
.sheet td:nth-child(2),
.sheet td:nth-child(3),
.sheet td:last-child,
.sheet .flagged,
.num {
    font-family: 'Open Sans', 'Noto Sans', sans-serif;
    font-size: 13px;
}
.num {
    line-height: 1;
}
.sheet .corner {
    width: 26px;
    background: linear-gradient(135deg, transparent 50%, #b5b5b5 50%) 10px 4px / 12px 12px no-repeat #e6e6e6;
}
.sheet thead .current {
    background-color: #d2d2d2;
    color: #217346;
}
.sheet .titles td {
    height: 60px;
    padding: 0;
    text-align: center;
    font-family: Lato, 'Open Sans', sans-serif;
    font-size: 14px;
    font-weight: 700;
    line-height: 20px;
    border-color: #000;
}
.sheet .titles th {
    vertical-align: bottom;
    color: #217346;
    background-color: #d2d2d2;
    border-right: 2px solid #217346;
}
.sheet .titles .selected {
    position: relative;
    overflow: visible;
}
.selected::before {
    content: '';
    position: absolute;
    inset: -2px;
    border: 2px solid #217346;
}
.selected::after {
    content: '';
    position: absolute;
    right: -3px;
    bottom: -3px;
    width: 5px;
    height: 5px;
    background-color: #217346;
    outline: 1px solid #fff;
}
.sheet .flagged {
    background: linear-gradient(135deg, #107c10 50%, transparent 50%) 0 0 / 6px 6px no-repeat;
}

/* scroll bars */
.scroll-y {
    width: 21px;
    display: flex;
    flex-direction: column;
    padding: 2px 3px 0;
    background: linear-gradient(#dadada, #dadada) 3px 0 / 15px 100% no-repeat;
}
.scroll-y button, .scroll-x button {
    flex: none;
    width: 15px;
    height: 15px;
    display: flex;
    align-items: center;
    justify-content: center;
    background-color: #fff;
    border: 1px solid #ababab;
}
.scroll-y .thumb {
    height: 18px;
    background-color: #fff;
    border: 1px solid #ababab;
}
.scroll-y .end {
    margin-top: auto;
}
.sheet-tabs {
    flex: none;
    height: 28px;
    display: flex;
    align-items: center;
    padding-right: 21px;
    border-bottom: 1px solid #bdbdbd;
}
.nav-arrow {
    width: 5px;
    margin-left: 26px;
}
.nav-arrow + .nav-arrow {
    margin-left: 24px;
}
.sheet-tab {
    align-self: flex-start;
    height: 25px;
    margin: -1px 0 0 40px;
    padding: 0 11px;
    background-color: #fff;
    border: 1px solid #ababab;
    border-top: 0;
    border-bottom: 2px solid #217346;
    color: #217346;
    font-size: 12px;
    font-weight: 700;
    line-height: 26px;
}
.add-sheet {
    margin-left: 33px;
}
.sheet-tabs .grip {
    margin-left: auto;
    margin-right: 16px;
}
.scroll-x {
    width: 38%;
    display: flex;
    height: 15px;
}
.scroll-x .track {
    flex: 1;
    background-color: #dadada;
}
.scroll-x .thumb {
    width: 104px;
    height: 15px;
    margin-left: 55%;
    background-color: #fff;
    border: 1px solid #ababab;
}

/* status bar */
.status {
    flex: none;
    height: 22px;
    display: flex;
    align-items: center;
    padding-right: 7px;
    background-color: #f1f1f1;
    border-bottom: 1px solid #b0b4ba;
    line-height: 14px;
}
.ready {
    margin-right: auto;
    padding: 0 0 1px 7px;
}
.percent {
    padding-bottom: 1px;
}
.view {
    width: 38px;
    height: 21px;
    display: flex;
    align-items: center;
    justify-content: center;
}
.zoom-step {
    margin: 0 4px 0 6px;
}
.zoom {
    width: 100px;
    height: 12px;
    appearance: none;
    background: linear-gradient(#ababab, #ababab) 0 5px / 100% 1px no-repeat;
}
.zoom + .zoom-step {
    margin: 0 16px 0 4px;
}
.zoom::-webkit-slider-thumb {
    appearance: none;
    width: 4px;
    height: 11px;
    background-color: #666;
}

/* taskbar */
.taskbar {
    flex: none;
    height: 47px;
    display: grid;
    grid-template-columns: 1fr auto 1fr;
    align-items: center;
    background: linear-gradient(90deg, #d5dfea, #e0dde5 14%, #d2dde9 30%, #d6deea 60%, #d8dfe9);
    color: #222;
    font-size: 12px;
    line-height: 16px;
}
.weather {
    display: flex;
    gap: 2px;
    padding: 0 0 2px 21px;
}
.weather small {
    font-size: 12px;
    color: #555;
}
.apps {
    display: flex;
    gap: 6px;
}
.apps button {
    position: relative;
    width: 38px;
    height: 40px;
    display: flex;
    align-items: center;
    justify-content: center;
    border-radius: 4px;
}
.apps .current {
    background-color: #e9eef5;
}
.running::after {
    content: '';
    position: absolute;
    left: 16px;
    bottom: 1px;
    width: 6px;
    height: 3px;
    border-radius: 2px;
    background-color: #7a7f86;
}
.running.current::after {
    left: 11px;
    width: 16px;
    background-color: #0078d4;
}
.search {
    width: 218px;
    height: 32px;
    display: flex;
    align-items: center;
    gap: 10px;
    margin: 4px 0;
    padding: 0 8px 0 11px;
    border-radius: 16px;
    background-color: #f2f5fa;
    box-shadow: 0 1px 1px #b5becb;
}
.search input {
    flex: 1;
    min-width: 0;
    font-size: 12px;
}
.search input::placeholder {
    color: #666;
}
.tray {
    display: flex;
    align-items: center;
    justify-content: flex-end;
    gap: 14px;
    padding: 0 19px 1px 0;
}
.tray .language {
    margin: 0 3px 0 4px;
}
.system {
    display: flex;
    gap: 6px;
}
.clock {
    text-align: right;
}
```
